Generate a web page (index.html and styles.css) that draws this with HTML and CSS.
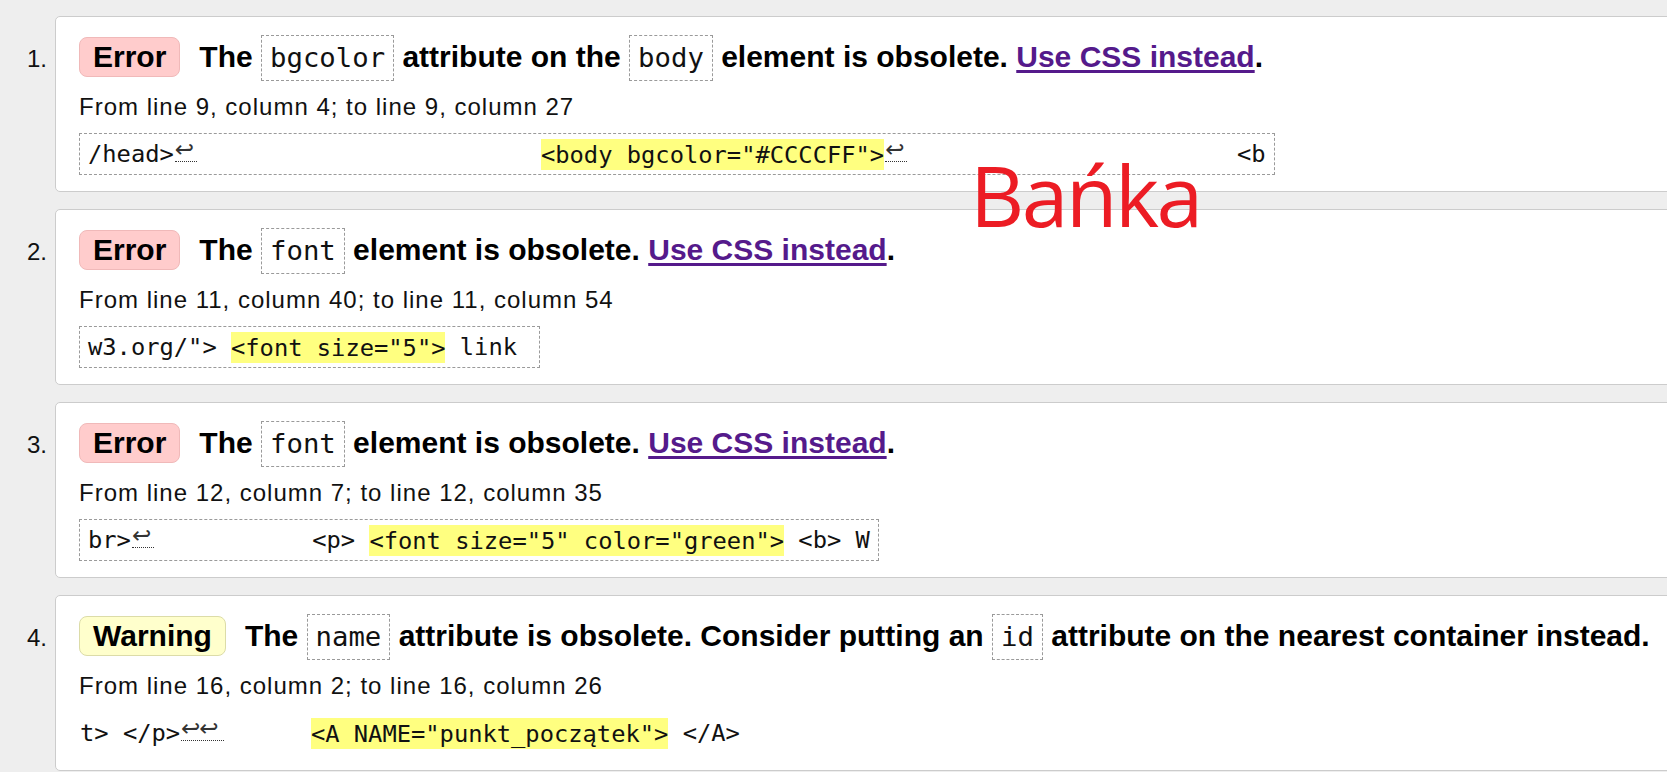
FILE: index.html
```html
<!DOCTYPE html>
<html lang="en">
<head>
<meta charset="utf-8">
<title>Validation messages</title>
<link rel="stylesheet" href="styles.css">
</head>
<body>
<ol class="messages">
  <li class="msg">
    <span class="num">1.</span>
    <div class="card">
      <p class="head"><span class="badge error">Error</span>The <code class="ic">bgcolor</code> attribute on the <code class="ic">body</code> element is obsolete. <a href="#" class="link">Use CSS instead</a>.</p>
      <p class="loc">From line 9, column 4; to line 9, column 27</p>
      <div class="extract"><code>/head&gt;<span class="lf">↩</span>                        <mark>&lt;body bgcolor="#CCCCFF"&gt;</mark><span class="lf">↩</span>                       &lt;b</code></div>
    </div>
  </li>
  <li class="msg">
    <span class="num">2.</span>
    <div class="card">
      <p class="head"><span class="badge error">Error</span>The <code class="ic">font</code> element is obsolete. <a href="#" class="link">Use CSS instead</a>.</p>
      <p class="loc">From line 11, column 40; to line 11, column 54</p>
      <div class="extract"><code>w3.org/"&gt; <mark>&lt;font size="5"&gt;</mark> link </code></div>
    </div>
  </li>
  <li class="msg">
    <span class="num">3.</span>
    <div class="card">
      <p class="head"><span class="badge error">Error</span>The <code class="ic">font</code> element is obsolete. <a href="#" class="link">Use CSS instead</a>.</p>
      <p class="loc">From line 12, column 7; to line 12, column 35</p>
      <div class="extract"><code>br&gt;<span class="lf">↩</span>           &lt;p&gt; <mark>&lt;font size="5" color="green"&gt;</mark> &lt;b&gt; W</code></div>
    </div>
  </li>
  <li class="msg">
    <span class="num">4.</span>
    <div class="card">
      <p class="head"><span class="badge warning">Warning</span>The <code class="ic">name</code> attribute is obsolete. Consider putting an <code class="ic">id</code> attribute on the nearest container instead.</p>
      <p class="loc">From line 16, column 2; to line 16, column 26</p>
      <div class="extract plain"><code>t&gt; &lt;/p&gt;<span class="lf2">↩↩</span>      <mark>&lt;A NAME="punkt_początek"&gt;</mark> &lt;/A&gt;</code></div>
    </div>
  </li>
</ol>
<div class="stamp">Bańka</div>
</body>
</html>
```

FILE: styles.css
```css
html, body {
  margin: 0;
  padding: 0;
}
body {
  background: #eeeeee;
  color: #000;
  font-family: "Liberation Sans", Arial, sans-serif;
  overflow: hidden;
  position: relative;
  height: 772px;
}
.messages {
  list-style: none;
  margin: 0;
  padding: 16px 0 0 0;
  width: 1760px;
}
.msg {
  display: flex;
  align-items: baseline;
  margin-bottom: 17px;
}
.num {
  flex: none;
  width: 47px;
  margin-right: 8px;
  text-align: right;
  font-size: 24px;
  color: #111;
}
.card {
  flex: none;
  width: 1660px;
  background: #fff;
  border: 1px solid #cccccc;
  border-radius: 5px;
  padding: 16px 23px;
}
.head {
  margin: 0;
  font-weight: bold;
  font-size: 30px;
  line-height: 48px;
  white-space: nowrap;
}
.badge {
  display: inline-block;
  line-height: 38px;
  padding: 0 13px;
  border: 1px solid;
  border-radius: 8px;
  margin-right: 19px;
}
.badge.error {
  background: #ffcccc;
  border-color: #f0b9b9;
}
.badge.warning {
  background: #ffffcc;
  border-color: #dcdca8;
}
.ic {
  display: inline-block;
  font-family: "DejaVu Sans Mono", "Liberation Mono", monospace;
  font-weight: normal;
  font-size: 27.3px;
  line-height: 32px;
  padding: 6px 8px;
  border: 1px dashed #9a9a9a;
  color: #111;
}
.link {
  color: #551a8b;
  text-decoration: underline;
  text-underline-offset: 3px;
  text-decoration-thickness: 3px;
}
.loc {
  margin: 11px 0 0 0;
  font-size: 24px;
  line-height: 30px;
  letter-spacing: 1px;
  color: #111;
}
.extract {
  margin-top: 11px;
  width: max-content;
  border: 1px dashed #9a9a9a;
  padding: 0 8px;
  font-family: "DejaVu Sans Mono", "Liberation Mono", monospace;
  font-size: 23.75px;
  line-height: 40px;
  white-space: pre;
  color: #111;
}
.extract code {
  font: inherit;
}
.extract.plain {
  border-color: transparent;
  padding: 0;
}
.extract mark {
  background: #ffff80;
  color: #111;
  padding: 1.5px 0;
}
.lf, .lf2 {
  display: inline-block;
  font-family: "DejaVu Sans", sans-serif;
  font-size: 23px;
  line-height: 24px;
  color: #333;
  border-bottom: 1px dotted #333;
  margin: 0 1px;
  text-align: left;
  overflow: hidden;
  vertical-align: baseline;
}
.lf {
  width: 22px;
}
.lf2 {
  width: 43px;
  letter-spacing: -1px;
}
.stamp {
  position: absolute;
  left: 970px;
  top: 153px;
  font-family: "Open Sans", "Noto Sans", sans-serif;
  font-size: 84px;
  line-height: 84px;
  letter-spacing: -2.5px;
  color: #ec1c24;
}
```
